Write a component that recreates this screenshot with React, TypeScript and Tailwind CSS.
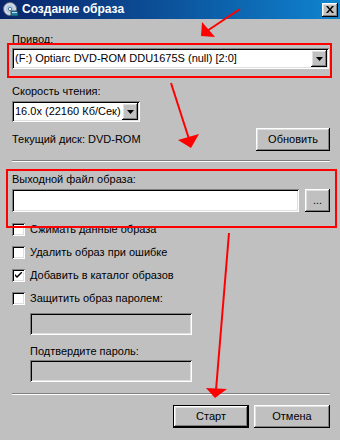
import React from "react";

const sunken =
  "shadow-[inset_1px_1px_0_#808080,inset_-1px_-1px_0_#ffffff,inset_2px_2px_0_#000000,inset_-2px_-2px_0_#dfdfdf]";
const raised =
  "shadow-[inset_-1px_-1px_0_#000000,inset_1px_1px_0_#ffffff,inset_-2px_-2px_0_#808080,inset_2px_2px_0_#dfdfdf]";

function DropBtn() {
  return (
    <div className={`w-[16px] h-[17px] bg-[#c0c0c0] flex items-center justify-center ${raised}`}>
      <svg width="7" height="4" viewBox="0 0 7 4">
        <polygon points="0,0 7,0 3.5,4" fill="#000" />
      </svg>
    </div>
  );
}

function Check({ checked, label }: { checked?: boolean; label: string }) {
  return (
    <div className="flex items-center h-[13px]">
      <div className={`w-[13px] h-[13px] bg-white flex items-center justify-center ${sunken}`}>
        {checked && (
          <svg width="7" height="7" viewBox="0 0 7 7">
            <path d="M0 2 L2 4 L7 -1 L7 1 L2 6 L0 4 Z" fill="#000" />
          </svg>
        )}
      </div>
      <span className="ml-[5px] leading-[13px]">{label}</span>
    </div>
  );
}

export default function App() {
  return (
    <div
      className="relative w-[340px] h-[440px] bg-[#c0c0c0] overflow-hidden text-[11px] text-black"
      style={{ fontFamily: '"Liberation Sans", Arial, sans-serif' }}
    >
      {/* Title bar */}
      <div className="h-[19px] flex items-center bg-gradient-to-r from-[#0a246a] to-[#1084d0]">
        <svg width="16" height="16" viewBox="0 0 16 16" className="ml-[3px]">
          <circle cx="7" cy="7" r="6.5" fill="#d8d8e8" stroke="#607080" strokeWidth="1" />
          <circle cx="7" cy="7" r="4" fill="#b0c8e0" />
          <circle cx="7" cy="7" r="1.6" fill="#ffffff" stroke="#406080" strokeWidth="0.8" />
          <rect x="8" y="9" width="7" height="5" fill="#2080a0" stroke="#104050" strokeWidth="0.8" />
          <rect x="9" y="10" width="5" height="1" fill="#c0e0f0" />
        </svg>
        <span className="ml-[3px] text-white font-bold text-[12px] leading-[19px]">Создание образа</span>
        <div className={`ml-auto mr-[2px] w-[16px] h-[14px] bg-[#c0c0c0] flex items-center justify-center ${raised}`}>
          <svg width="8" height="7" viewBox="0 0 8 7">
            <path d="M0 0 L2 0 L4 2.5 L6 0 L8 0 L5 3.5 L8 7 L6 7 L4 4.5 L2 7 L0 7 L3 3.5 Z" fill="#000" />
          </svg>
        </div>
      </div>

      <div className="ml-[12px] w-[318px] flex flex-col">
        <div className="mt-[14px] leading-[13px]">Привод:</div>
        <div className={`mt-[2px] w-[317px] h-[21px] bg-white flex items-center pl-[3px] pr-[2px] ${sunken}`}>
          <span className="flex-1 leading-[13px] whitespace-nowrap">(F:) Optiarc DVD-ROM DDU1675S (null) [2:0]</span>
          <DropBtn />
        </div>

        <div className="mt-[16px] leading-[13px]">Скорость чтения:</div>
        <div className={`mt-[3px] w-[128px] h-[21px] bg-white flex items-center pl-[3px] pr-[2px] ${sunken}`}>
          <span className="flex-1 leading-[13px] whitespace-nowrap overflow-hidden">16.0x (22160 Кб/Сек)</span>
          <DropBtn />
        </div>

        <div className="mt-[6px] flex items-center">
          <span className="flex-1 leading-[13px]">Текущий диск: DVD-ROM</span>
          <div className={`w-[74px] h-[23px] flex items-center justify-center leading-[13px] ${raised}`}>Обновить</div>
        </div>

        <div className="mt-[9px] h-0 border-t border-b border-t-[#808080] border-b-white" />

        <div className="mt-[11px] leading-[13px]">Выходной файл образа:</div>
        <div className="mt-[3px] flex gap-[6px]">
          <div className={`w-[288px] h-[23px] bg-white ${sunken}`} />
          <div className={`w-[25px] h-[23px] flex items-center justify-center leading-[13px] ${raised}`}>...</div>
        </div>

        <div className="mt-[11px] flex flex-col gap-[10px]">
          <Check label="Сжимать данные образа" />
          <Check label="Удалить образ при ошибке" />
          <Check checked label="Добавить в каталог образов" />
          <Check label="Защитить образ паролем:" />
        </div>

        <div className={`mt-[8px] ml-[18px] w-[162px] h-[22px] bg-[#c0c0c0] ${sunken}`} />
        <div className="mt-[10px] ml-[18px] leading-[13px]">Подтвердите пароль:</div>
        <div className={`mt-[2px] ml-[18px] w-[162px] h-[22px] bg-[#c0c0c0] ${sunken}`} />

        <div className="mt-[11px] h-0 border-t border-b border-t-[#808080] border-b-white" />

        <div className="mt-[10px] flex justify-end gap-[5px]">
          <div className="w-[76px] h-[23px] border border-black">
            <div className={`w-full h-full flex items-center justify-center leading-[13px] ${raised}`}>Старт</div>
          </div>
          <div className={`w-[76px] h-[23px] flex items-center justify-center leading-[13px] ${raised}`}>Отмена</div>
        </div>
      </div>

      {/* Annotations */}
      <div className="absolute left-[7px] top-[43px] w-[325px] h-[35px] border-2 border-[#ff0000] pointer-events-none" />
      <div className="absolute left-[6px] top-[169px] w-[331px] h-[59px] border-2 border-[#ff0000] pointer-events-none" />
      <svg className="absolute left-0 top-0 pointer-events-none" width="340" height="440" viewBox="0 0 340 440">
        <line x1="240" y1="9" x2="207" y2="31" stroke="#ff0000" strokeWidth="2" />
        <polygon points="202,22 201,36 215,37" fill="#ff0000" />
        <line x1="171" y1="83" x2="189" y2="139" stroke="#ff0000" strokeWidth="2" />
        <polygon points="178,140 199,134 191,148" fill="#ff0000" />
        <line x1="229" y1="233" x2="216" y2="390" stroke="#ff0000" strokeWidth="2" />
        <polygon points="206,388 227,389 215,398" fill="#ff0000" />
      </svg>
    </div>
  );
}
